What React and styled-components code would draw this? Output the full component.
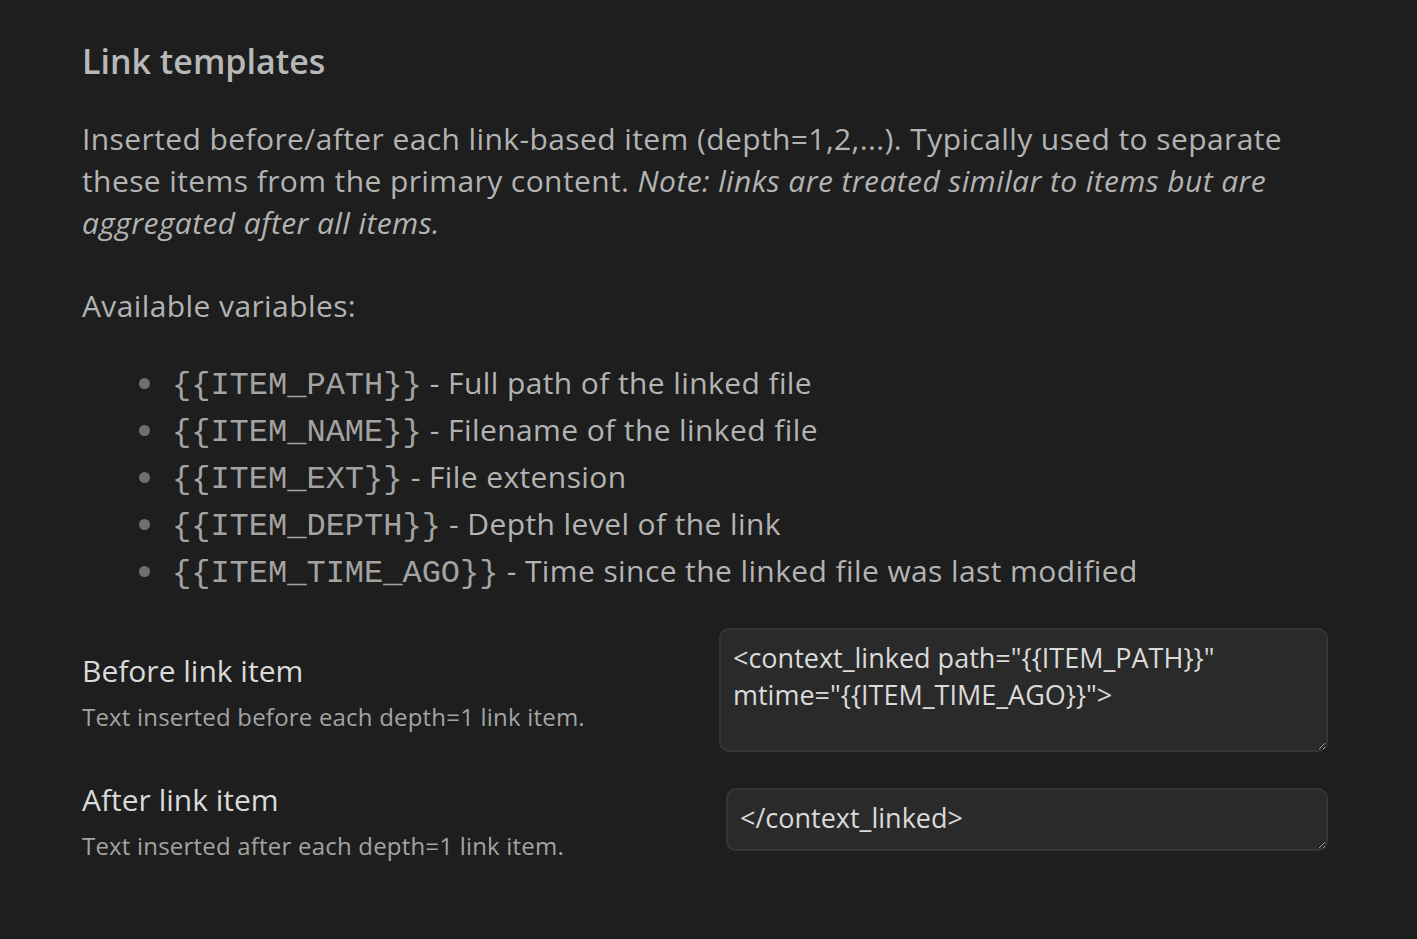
import React from 'react'
import styled, {createGlobalStyle} from 'styled-components'

const GlobalStyle = createGlobalStyle`
  html, body {
    margin: 0;
    background: #1e1e1e;
    color-scheme: dark;
  }
  body {
    font-family: "Open Sans", "Noto Sans", sans-serif;
  }
`

const Page = styled.div`
  min-height: 939px;
  box-sizing: border-box;
  padding: 36px 89px 40px 82px;
  background: #1e1e1e;
`

const Heading = styled.h3`
  margin: 0 0 32px;
  font-size: 34px;
  font-weight: 600;
  line-height: 50px;
  color: #b8b8b8;
`

const Paragraph = styled.p`
  margin: 0 0 ${p => p.gap || 0}px;
  font-size: 30px;
  letter-spacing: 0.4px;
  line-height: 42px;
  color: #b3b3b3;
  em {
    font-style: italic;
  }
`

const VarList = styled.ul`
  margin: 0 0 34px;
  padding-left: 90px;
  list-style: none;
`

const VarItem = styled.li`
  position: relative;
  font-size: 30px;
  letter-spacing: 0.4px;
  line-height: 47px;
  color: #b3b3b3;
  &::before {
    content: '';
    position: absolute;
    left: -33px;
    top: 19px;
    width: 11px;
    height: 11px;
    border-radius: 50%;
    background: #6f6f6f;
  }
`

const Code = styled.code`
  font-family: "Liberation Mono", "Courier New", monospace;
  font-size: 32px;
  letter-spacing: 0;
  line-height: 1;
  color: #a3a3a3;
`

const SettingRow = styled.div`
  display: flex;
  align-items: center;
  justify-content: space-between;
  gap: 40px;
  margin-bottom: ${p => p.gap || 0}px;
`

const SettingInfo = styled.div`
  display: flex;
  flex-direction: column;
  gap: 9px;
  padding-top: 4px;
`

const SettingName = styled.div`
  font-size: 30px;
  line-height: 40px;
  color: #dadada;
`

const SettingDesc = styled.div`
  font-size: 24px;
  letter-spacing: 0.2px;
  line-height: 34px;
  color: #a3a3a3;
`

const TextArea = styled.textarea`
  box-sizing: border-box;
  width: ${p => p.w}px;
  height: ${p => p.h}px;
  padding: 9px 12px;
  border: 2px solid #363636;
  border-radius: 10px;
  background: #2a2a2a;
  color: #dadada;
  font-family: "Open Sans", "Noto Sans", sans-serif;
  font-size: 27px;
  line-height: 37px;
  resize: vertical;
  outline: none;
`

const vars = [
  ['{{ITEM_PATH}}', 'Full path of the linked file'],
  ['{{ITEM_NAME}}', 'Filename of the linked file'],
  ['{{ITEM_EXT}}', 'File extension'],
  ['{{ITEM_DEPTH}}', 'Depth level of the link'],
  ['{{ITEM_TIME_AGO}}', 'Time since the linked file was last modified'],
]

export default function App() {
  return (
    <Page>
      <GlobalStyle/>
      <Heading>Link templates</Heading>
      <Paragraph gap={41}>
        Inserted before/after each link-based item (depth=1,2,...). Typically used to separate
        these items from the primary content. <em>Note: links are treated similar to items but are
        aggregated after all items.</em>
      </Paragraph>
      <Paragraph gap={32}>Available variables:</Paragraph>
      <VarList>
        {vars.map(([code, text]) => (
          <VarItem key={code}>
            <Code>{code}</Code> - {text}
          </VarItem>
        ))}
      </VarList>
      <SettingRow gap={24}>
        <SettingInfo>
          <SettingName>Before link item</SettingName>
          <SettingDesc>Text inserted before each depth=1 link item.</SettingDesc>
        </SettingInfo>
        <TextArea
          w={609}
          h={124}
          defaultValue={'<context_linked path="{{ITEM_PATH}}"\nmtime="{{ITEM_TIME_AGO}}">'}
        />
      </SettingRow>
      <SettingRow>
        <SettingInfo>
          <SettingName>After link item</SettingName>
          <SettingDesc>Text inserted after each depth=1 link item.</SettingDesc>
        </SettingInfo>
        <TextArea w={602} h={63} defaultValue={'</context_linked>'}/>
      </SettingRow>
    </Page>
  )
}
